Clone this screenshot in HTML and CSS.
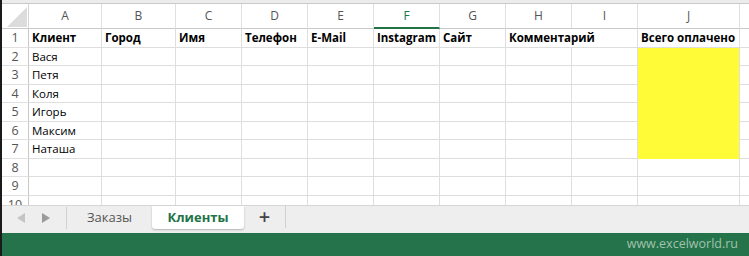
FILE: index.html
```html
<!DOCTYPE html>
<html lang="ru">
<head>
    <meta charset="UTF-8">
    <meta name="viewport" content="width=device-width, initial-scale=1.0">
    <title>Клиенты</title>
    <link rel="stylesheet" href="styles.css">
</head>
<body>

    <div class="window">
        <div class="top-strip"></div>

        <!-- Sheet grid -->
        <div class="sheet">
            <div class="corner"><span class="corner-tri"></span></div>
            <div class="col-head">A</div>
            <div class="col-head">B</div>
            <div class="col-head">C</div>
            <div class="col-head">D</div>
            <div class="col-head">E</div>
            <div class="col-head active">F</div>
            <div class="col-head">G</div>
            <div class="col-head">H</div>
            <div class="col-head">I</div>
            <div class="col-head">J</div>
            <div class="col-head last"></div>

            <div class="row-head">1</div>
            <div class="cell bold">Клиент</div>
            <div class="cell bold">Город</div>
            <div class="cell bold">Имя</div>
            <div class="cell bold">Телефон</div>
            <div class="cell bold">E-Mail</div>
            <div class="cell bold">Instagram</div>
            <div class="cell bold">Сайт</div>
            <div class="cell bold span2">Комментарий</div>
            <div class="cell bold">Всего оплачено</div>
            <div class="cell"></div>

            <div class="row-head">2</div>
            <div class="cell">Вася</div>
            <div class="cell"></div><div class="cell"></div><div class="cell"></div><div class="cell"></div>
            <div class="cell"></div><div class="cell"></div><div class="cell"></div><div class="cell"></div>
            <div class="cell paid"></div>
            <div class="cell"></div>

            <div class="row-head">3</div>
            <div class="cell">Петя</div>
            <div class="cell"></div><div class="cell"></div><div class="cell"></div><div class="cell"></div>
            <div class="cell"></div><div class="cell"></div><div class="cell"></div><div class="cell"></div>
            <div class="cell paid"></div>
            <div class="cell"></div>

            <div class="row-head">4</div>
            <div class="cell">Коля</div>
            <div class="cell"></div><div class="cell"></div><div class="cell"></div><div class="cell"></div>
            <div class="cell"></div><div class="cell"></div><div class="cell"></div><div class="cell"></div>
            <div class="cell paid"></div>
            <div class="cell"></div>

            <div class="row-head">5</div>
            <div class="cell">Игорь</div>
            <div class="cell"></div><div class="cell"></div><div class="cell"></div><div class="cell"></div>
            <div class="cell"></div><div class="cell"></div><div class="cell"></div><div class="cell"></div>
            <div class="cell paid"></div>
            <div class="cell"></div>

            <div class="row-head">6</div>
            <div class="cell">Максим</div>
            <div class="cell"></div><div class="cell"></div><div class="cell"></div><div class="cell"></div>
            <div class="cell"></div><div class="cell"></div><div class="cell"></div><div class="cell"></div>
            <div class="cell paid"></div>
            <div class="cell"></div>

            <div class="row-head">7</div>
            <div class="cell">Наташа</div>
            <div class="cell"></div><div class="cell"></div><div class="cell"></div><div class="cell"></div>
            <div class="cell"></div><div class="cell"></div><div class="cell"></div><div class="cell"></div>
            <div class="cell paid"></div>
            <div class="cell"></div>

            <div class="row-head">8</div>
            <div class="cell"></div><div class="cell"></div><div class="cell"></div><div class="cell"></div><div class="cell"></div>
            <div class="cell"></div><div class="cell"></div><div class="cell"></div><div class="cell"></div><div class="cell"></div>
            <div class="cell"></div>

            <div class="row-head">9</div>
            <div class="cell"></div><div class="cell"></div><div class="cell"></div><div class="cell"></div><div class="cell"></div>
            <div class="cell"></div><div class="cell"></div><div class="cell"></div><div class="cell"></div><div class="cell"></div>
            <div class="cell"></div>

            <div class="row-head">10</div>
            <div class="cell"></div><div class="cell"></div><div class="cell"></div><div class="cell"></div><div class="cell"></div>
            <div class="cell"></div><div class="cell"></div><div class="cell"></div><div class="cell"></div><div class="cell"></div>
            <div class="cell"></div>
        </div>

        <!-- Sheet tabs -->
        <div class="tabs">
            <div class="tab-nav">
                <span class="arrow left"></span>
                <span class="arrow right"></span>
            </div>
            <div class="tab">Заказы</div>
            <div class="tab current">Клиенты</div>
            <div class="tab add">+</div>
        </div>

        <!-- Status bar -->
        <div class="status">www.excelworld.ru</div>
    </div>

</body>
</html>
```

FILE: styles.css
```css
/* Global */
body {
    margin: 0;
    padding: 0;
    font-family: 'Open Sans', 'Noto Sans', sans-serif;
    background: #fff;
}

.window {
    width: 749px;
    height: 256px;
    display: flex;
    flex-direction: column;
    border-left: 2px solid #1a1a1a;
    box-sizing: border-box;
    overflow: hidden;
}

.top-strip {
    height: 3px;
    background: #ececec;
    border-bottom: 1px solid #c9c9c9;
    flex-shrink: 0;
}

/* Grid of cells */
.sheet {
    height: 201px;
    flex-shrink: 0;
    overflow: hidden;
    display: grid;
    grid-template-columns: 27px 73px 74px 66px 66px 66px 66px 66px 66px 66px 102px 20px;
    grid-template-rows: 25px repeat(10, 18.5px);
    color: #000;
}

.corner {
    border-right: 1px solid #d4d4d4;
    border-bottom: 1px solid #c8c8c8;
    position: relative;
}

.corner-tri {
    position: absolute;
    right: 1px;
    bottom: 1px;
    width: 0;
    height: 0;
    border-left: 20px solid transparent;
    border-bottom: 20px solid #dcdcdc;
}

.col-head {
    font-size: 12px;
    color: #555;
    text-align: center;
    line-height: 24px;
    border-right: 1px solid #e0e0e0;
    border-bottom: 1px solid #c8c8c8;
    box-sizing: border-box;
}

.col-head.active {
    color: #217346;
    border-bottom: 2px solid #217346;
}

.col-head.last {
    border-right: none;
}

.row-head {
    font-size: 12.5px;
    color: #555;
    text-align: center;
    line-height: 18px;
    border-right: 1px solid #c8c8c8;
    border-bottom: 1px solid #e0e0e0;
    box-sizing: border-box;
}

.cell {
    font-size: 11.5px;
    font-weight: 500;
    line-height: 18px;
    padding-left: 3px;
    white-space: nowrap;
    overflow: visible;
    border-right: 1px solid #dedede;
    border-bottom: 1px solid #dedede;
    box-sizing: border-box;
}

.cell.bold {
    font-weight: 700;
}

.cell.span2 {
    grid-column: span 2;
}

.cell.paid {
    background: #fffb37;
    border-bottom-color: #fffb37;
}

/* Tabs */
.tabs {
    height: 28px;
    flex-shrink: 0;
    background: #eeeeee;
    border-top: 1px solid #d6d6d6;
    display: flex;
    align-items: flex-start;
    box-sizing: border-box;
}

.tab-nav {
    width: 65px;
    height: 22px;
    display: flex;
    align-items: center;
    gap: 17px;
    padding-left: 15px;
    box-sizing: border-box;
    border-right: 1px solid #d0d0d0;
    margin-top: 1px;
}

.arrow {
    width: 0;
    height: 0;
    border-top: 5px solid transparent;
    border-bottom: 5px solid transparent;
}

.arrow.left {
    border-right: 8px solid #c4c4c4;
}

.arrow.right {
    border-left: 8px solid #9a9a9a;
}

.tab {
    height: 23px;
    line-height: 22px;
    font-size: 13px;
    color: #555;
    text-align: center;
    width: 85px;
}

.tab.current {
    width: 92px;
    background: #fff;
    color: #217346;
    font-weight: 700;
    border-radius: 0 0 3px 3px;
    box-shadow: 0 1px 2px rgba(0, 0, 0, 0.25);
}

.tab.add {
    width: 41px;
    font-size: 20px;
    font-weight: 600;
    color: #444;
    border-right: 1px solid #d0d0d0;
    height: 22px;
    line-height: 21px;
}

/* Status bar */
.status {
    flex: 1;
    background: #24734a;
    color: #a3c2ad;
    font-size: 12.5px;
    text-align: right;
    padding-right: 11px;
    line-height: 22px;
}
```
